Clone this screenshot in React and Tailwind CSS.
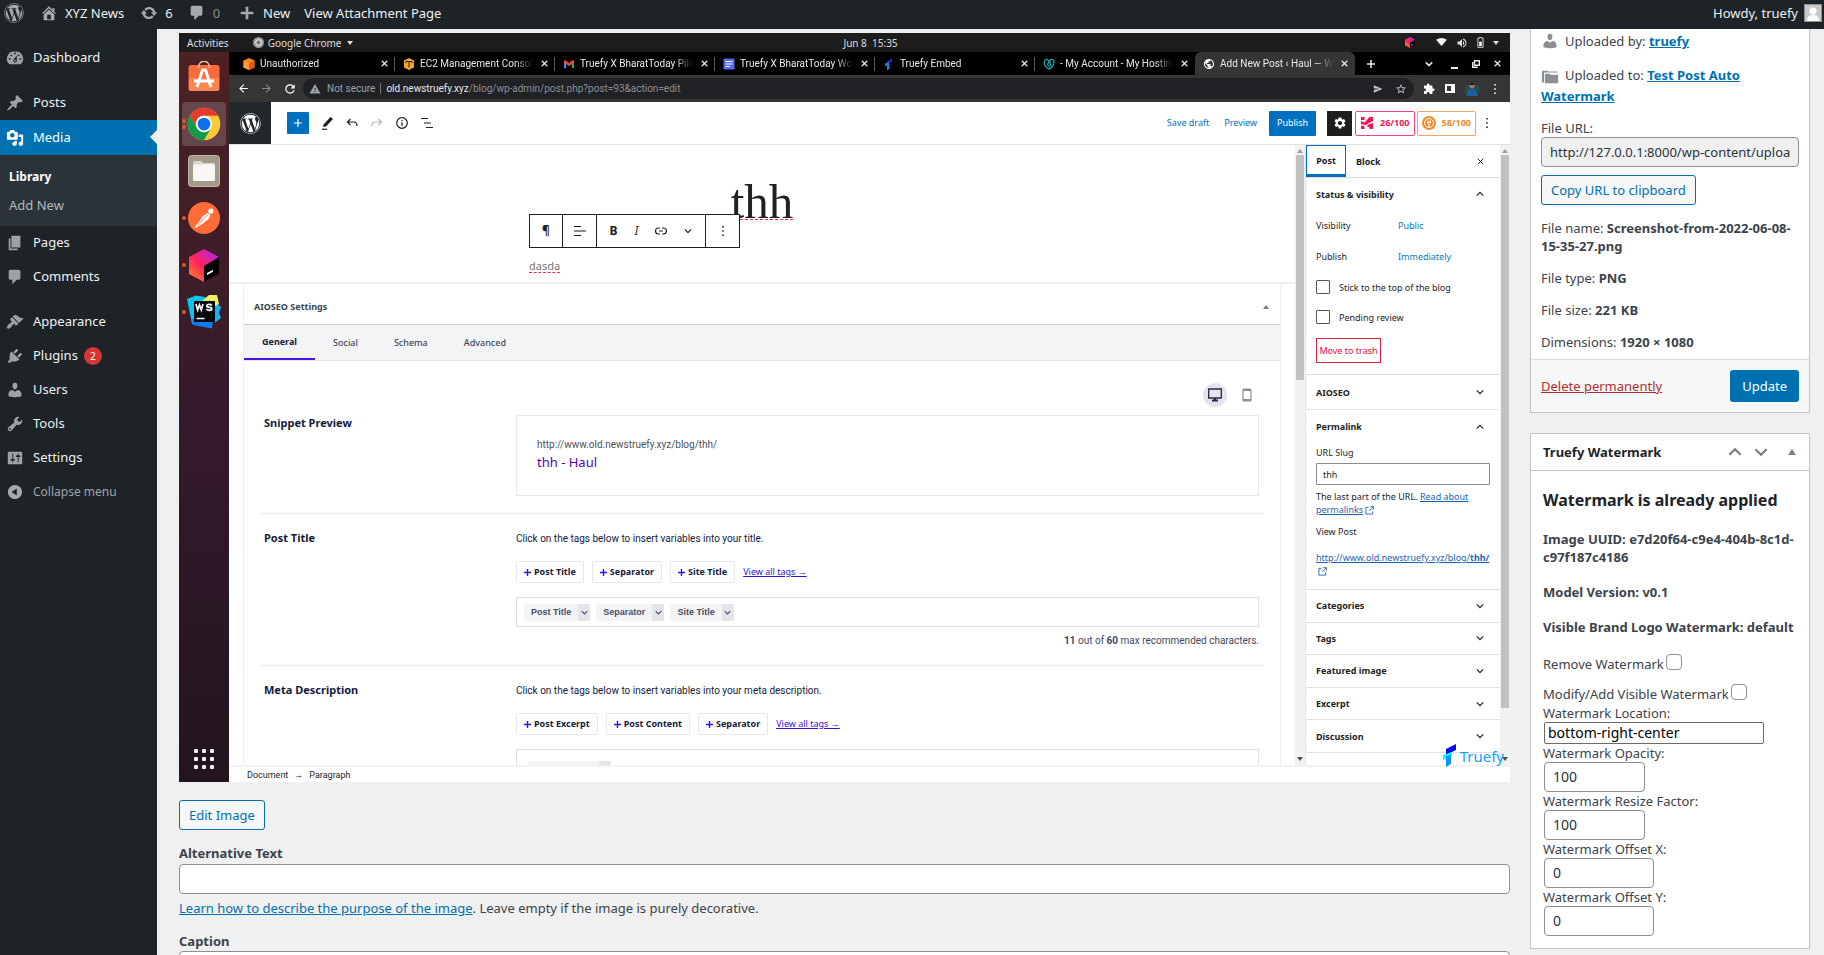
import React from "react";
import { FaWordpress } from "react-icons/fa";
import {
  MdArrowBack, MdArrowForward, MdRefresh, MdWarning, MdSend, MdStarBorder, MdExtension,
  MdSettings, MdPublic, MdVolumeUp,
} from "react-icons/md";

const ICONS = {
  home: "M16 8.5l1.53 1.53-1.06 1.06L10 4.6l-6.47 6.49-1.06-1.06L10 2.5l4 4v-2h2v4zm-6-2.46l6 5.99V18H4v-5.97zM12 17v-5H8v5h4z",
  update: "M10.2 3.28c3.53 0 6.43 2.61 6.92 6h2.08l-3.5 4-3.5-4h2.32c-.45-1.97-2.21-3.45-4.32-3.45-1.45 0-2.73.71-3.54 1.78L4.95 5.66C6.23 4.2 8.11 3.28 10.2 3.28zm-.4 13.44c-3.52 0-6.43-2.61-6.92-6H.8l3.5-4c1.17 1.33 2.33 2.67 3.5 4H5.48c.45 1.97 2.21 3.45 4.32 3.45 1.45 0 2.73-.71 3.54-1.78l1.71 1.95c-1.28 1.46-3.15 2.38-5.25 2.38z",
  comments: "M5 2h9c1.1 0 2 .9 2 2v7c0 1.1-.9 2-2 2h-2l-5 5v-5H5c-1.1 0-2-.9-2-2V4c0-1.1.9-2 2-2z",
  plus: "M17 8.5v3h-5.5V17h-3v-5.500H3v-3h5.500V3h3v5.500H17z",
  dashboard: "M3.76 17h12.48A7.998 7.998 0 0010 3a8 8 0 00-6.240 14zM10 4c.55 0 1 .45 1 1s-.45 1-1 1-1-.45-1-1 .45-1 1-1zM6 6c.55 0 1 .45 1 1s-.45 1-1 1-1-.45-1-1 .45-1 1-1zm8 0c.55 0 1 .45 1 1s-.45 1-1 1-1-.45-1-1 .45-1 1-1zm-5.370 5.550L12 7v6c0 1.1-.9 2-2 2s-2-.9-2-2c0-.57.24-1.08.63-1.45zM4 10c.55 0 1 .45 1 1s-.45 1-1 1-1-.45-1-1 .45-1 1-1zm12 0c.55 0 1 .45 1 1s-.45 1-1 1-1-.45-1-1 .45-1 1-1zm-5 3c0-.55-.45-1-1-1s-1 .45-1 1 .45 1 1 1 1-.45 1-1z",
  posts: "M10.44 3.02l1.82-1.82 6.36 6.35-1.83 1.82c-1.05-.68-2.48-.57-3.41.36l-.75.75c-.92.93-1.04 2.35-.35 3.41l-1.83 1.82-2.41-2.41-2.8 2.79c-.42.42-3.38 2.71-3.8 2.29s1.86-3.39 2.28-3.81l2.79-2.79L4.1 9.36l1.83-1.82c1.05.69 2.48.57 3.4-.36l.75-.75c.93-.92 1.05-2.35.36-3.41z",
  media: "M13 11V4c0-.55-.45-1-1-1h-1.67L9 1H5L3.67 3H2c-.55 0-1 .45-1 1v7c0 .55.45 1 1 1h10c.55 0 1-.45 1-1zM7 4.5c1.38 0 2.5 1.12 2.5 2.5S8.38 9.5 7 9.5 4.5 8.38 4.5 7 5.62 4.5 7 4.5zM14 6h5v10.5c0 1.38-1.12 2.5-2.5 2.5S14 17.88 14 16.5s1.12-2.5 2.5-2.5c.17 0 .34.02.5.05V9h-3V6zm-4 8.05V13h2v3.5c0 1.38-1.12 2.5-2.5 2.5S7 17.88 7 16.5 8.12 14 9.500 14c.17 0 .34.02.5.05z",
  pages: "M6 15V2h10v13H6zm-1 1h8v2H3V5h2v11z",
  appearance: "M14.48 11.06L7.41 3.99l1.5-1.5c.5-.56 2.3-.47 3.51.32 1.21.8 1.43 1.28 2.91 2.1 1.18.64 2.45 1.26 4.45.85zm-.71.71L6.7 4.7 4.93 6.47c-.39.39-.39 1.02 0 1.41l1.06 1.06c.39.39.39 1.03 0 1.42-.6.6-1.43 1.11-2.21 1.69-.35.26-.7.53-1.01.84C1.43 14.23.4 16.08 1.4 17.07c.99 1 2.84-.03 4.18-1.36.31-.31.58-.66.85-1.02.57-.78 1.08-1.61 1.69-2.21.39-.39 1.02-.39 1.41 0l1.06 1.06c.39.39 1.02.39 1.41 0z",
  plugins: "M13.11 4.36L9.87 7.6 8 5.73l3.24-3.24c.35-.34 1.05-.2 1.56.32.52.51.66 1.21.31 1.55zm-8 1.77l.91-1.12 9.01 9.01-1.19.84c-.71.71-2.63 1.16-3.82 1.16H6.14L4.9 17.26c-.59.59-1.54.59-2.12 0a1.49 1.49 0 010-2.12l1.24-1.24v-3.88c0-1.13.4-3.19 1.09-3.89zm7.26 3.97l3.24-3.24c.34-.35 1.04-.21 1.55.31.52.51.66 1.21.31 1.55l-3.24 3.25z",
  users: "M10 9.25c-2.27 0-2.73-3.44-2.73-3.44C7 4.02 7.82 2 9.97 2c2.16 0 2.98 2.02 2.71 3.81 0 0-.41 3.44-2.68 3.44zm0 2.57L12.72 10c2.39 0 4.52 2.33 4.52 4.53v2.49s-3.65 1.13-7.24 1.13c-3.65 0-7.24-1.13-7.24-1.13v-2.49c0-2.25 1.94-4.48 4.47-4.48z",
  tools: "M16.68 9.77c-1.34 1.34-3.3 1.67-4.95.99l-5.41 6.52c-.99.99-2.59.99-3.58 0s-.99-2.59 0-3.57l6.52-5.42c-.68-1.65-.35-3.61.99-4.95 1.28-1.28 3.12-1.62 4.72-1.06l-2.89 2.89 2.82 2.82 2.86-2.87c.53 1.58.18 3.39-1.08 4.65zM3.81 16.21c.4.39 1.04.39 1.43 0 .4-.4.4-1.04 0-1.43-.39-.4-1.03-.4-1.43 0a1.02 1.02 0 000 1.43z",
  settings: "M18 16V4c0-.55-.45-1-1-1H3c-.55 0-1 .45-1 1v12c0 .55.45 1 1 1h14c.55 0 1-.45 1-1zM8 11h1c.55 0 1 .45 1 1s-.45 1-1 1H8v1.5c0 .28-.22.5-.5.5s-.5-.22-.5-.5V13H6c-.55 0-1-.45-1-1s.45-1 1-1h1V5.5c0-.28.22-.5.5-.5s.5.22.5.5V11zm5-2h-1c-.55 0-1-.45-1-1s.45-1 1-1h1V5.5c0-.28.22-.5.5-.5s.5.22.5.5V7h1c.55 0 1 .45 1 1s-.45 1-1 1h-1v5.5c0 .28-.22.5-.5.5s-.5-.22-.5-.5V9z",
  collapse: "M10 2.16c4.33 0 7.84 3.51 7.84 7.84s-3.51 7.84-7.84 7.84S2.16 14.33 2.16 10 5.71 2.16 10 2.16zm2 11.72V6.12L6.18 9.97z",
  folder: "M1 3h6l1 1h10v1H3.500v11H1zM4.500 6.500h5l1 1H19V17H4.500z",
};

function Dash({ name, className = "size-[18px]" }) {
  return (
    <svg viewBox="0 0 20 20" className={`shrink-0 ${className}`} fill="currentColor" fillRule="evenodd" aria-hidden="true">
      <path d={ICONS[name]} />
    </svg>
  );
}

function Line({ d, width = 1.5, className }) {
  return (
    <svg viewBox="0 0 10 10" className={`shrink-0 ${className}`} fill="none" stroke="currentColor" strokeWidth={width} aria-hidden="true">
      <path d={d} />
    </svg>
  );
}

const Chevron = ({ up = false, className = "size-2", width }) => <Line d={up ? "M1 7l4-4 4 4" : "M1 3l4 4 4-4"} width={width} className={className} />;
const Cross = ({ className = "size-[7px]", width = 1.8 }) => <Line d="M1 1l8 8M9 1L1 9" width={width} className={className} />;
const Plus = ({ className = "size-2", width = 1.5 }) => <Line d="M5 0v10M0 5h10" width={width} className={className} />;

function Kebab({ className = "" }) {
  return (
    <svg viewBox="0 0 4 12" className={`h-3 w-1 shrink-0 ${className}`} fill="currentColor" aria-hidden="true">
      <path d="M1.200 1h1.600v1.600H1.200zM1.200 5.200h1.600v1.600H1.200zM1.200 9.400h1.600V11H1.200z" />
    </svg>
  );
}

/* ---------- Admin chrome ---------- */

function AdminBar() {
  return (
    <header className="flex h-[29px] shrink-0 items-center bg-[#1d2327] pb-[3px] pl-1 pr-[2px] text-[13px] leading-[18px] text-[#f0f0f1]">
      <a href="#wp" aria-label="About WordPress" className="text-[#a7aaad]"><FaWordpress className="size-[20px]" /></a>
      <a href="#site" className="ml-4 flex items-center gap-[7px]"><Dash name="home" className="size-[18px] text-[#a7aaad]" />XYZ News</a>
      <a href="#updates" className="ml-4 flex items-center gap-[7px]"><Dash name="update" className="size-[18px] text-[#a7aaad]" />6</a>
      <a href="#comments" className="ml-[15px] flex items-center gap-[7px] text-[#8c8f94]"><Dash name="comments" className="size-[18px] text-[#a7aaad]" />0</a>
      <a href="#new" className="ml-[18px] flex items-center gap-[7px]"><Dash name="plus" className="size-[18px] text-[#a7aaad]" />New</a>
      <a href="#view" className="ml-[14px]">View Attachment Page</a>
      <a href="#profile" className="ml-auto flex items-center gap-[6px]">
        Howdy, truefy
        <svg viewBox="0 0 18 18" className="size-[18px]" aria-hidden="true">
          <rect width="18" height="18" fill="#8c8f94" /><rect x="1" y="1" width="16" height="16" fill="#c9c9c9" />
          <circle cx="9" cy="7" r="3.500" fill="#fff" /><path d="M3 17c0-4 2-6 6-6s6 2 6 6z" fill="#fff" />
        </svg>
      </a>
    </header>
  );
}

function MenuItem({ icon, label, badge, className = "" }) {
  return (
    <a href={`#${icon}`} className={`flex h-[34px] items-center gap-[9px] pl-[6px] text-[#f0f0f1] ${className}`}>
      <Dash name={icon} className="size-[18px] text-[#9ca2a7]" />
      {label}
      {badge && <span className="-ml-[3px] flex size-[18px] items-center justify-center rounded-full bg-[#d63638] text-[10px] text-white">{badge}</span>}
    </a>
  );
}

function AdminMenu() {
  return (
    <nav className="flex w-[157px] shrink-0 flex-col bg-[#1d2327] pt-3 text-[13px]">
      <MenuItem icon="dashboard" label="Dashboard" />
      <MenuItem icon="posts" label="Posts" className="mt-[11px]" />
      <a href="#media" className="relative flex h-[35px] items-center gap-[9px] bg-[#0071b0] pl-[6px] text-white">
        <Dash name="media" />Media
        <span className="absolute right-0 top-[10px] border-y-[7px] border-r-[7px] border-y-transparent border-r-[#f0f0f1]" />
      </a>
      <div className="flex flex-col gap-2 bg-[#2c3338] pb-[11px] pl-[9px] pt-3 leading-[20px]">
        <a href="#library" className="text-[12px] font-bold text-white">Library</a>
        <a href="#add" className="text-[13px] text-[#b4b9be]">Add New</a>
      </div>
      <MenuItem icon="pages" label="Pages" />
      <MenuItem icon="comments" label="Comments" />
      <MenuItem icon="appearance" label="Appearance" className="mt-[11px]" />
      <MenuItem icon="plugins" label="Plugins" badge="2" />
      <MenuItem icon="users" label="Users" />
      <MenuItem icon="tools" label="Tools" />
      <MenuItem icon="settings" label="Settings" />
      <button className="flex h-[34px] items-center gap-[9px] pl-[6px] text-[12px] text-[#a0a4a8]">
        <Dash name="collapse" className="size-[18px] text-[#a7aaad]" />Collapse menu
      </button>
    </nav>
  );
}

/* ---------- Desktop capture: dock ---------- */

function Dots({ n }) {
  return (
    <span className="absolute left-0 flex h-full flex-col items-center justify-center gap-[2px]">
      {Array.from({ length: n }, (_, i) => <i key={i} className="size-1 rounded-full bg-[#e95420]" />)}
    </span>
  );
}

function ChromeLogo({ className }) {
  return (
    <svg viewBox="0 0 48 48" className={className} aria-hidden="true">
      <circle cx="24" cy="24" r="23" fill="#fdc934" />
      <path d="M4.100 12.500A23 23 0 0124 1a23 23 0 0119.900 11.500H24A11.500 11.500 0 0014 29.800z" fill="#e33b2e" />
      <path d="M4.100 12.500A23 23 0 0024 47l10-17.200A11.500 11.500 0 0114 29.800z" fill="#149a4c" />
      <circle cx="24" cy="24" r="11.500" fill="#fff" /><circle cx="24" cy="24" r="9" fill="#0b72e7" />
    </svg>
  );
}

function Toolbox({ className, id }) {
  return (
    <svg viewBox="0 0 30 33" className={className} aria-hidden="true">
      <defs>
        <linearGradient id={id} x1="0" y1="1" x2="1" y2="0">
          <stop offset="0" stopColor="#ff9419" /><stop offset=".45" stopColor="#ff2160" /><stop offset="1" stopColor="#a227ff" />
        </linearGradient>
      </defs>
      <path d="M15 0l15 8v17l-15 8-15-8V8z" fill={`url(#${id})`} />
      <path d="M30 8v17l-15 8V17z" fill="#000" /><path d="M18 26l6-3.300v-2L18 24z" fill="#fff" />
    </svg>
  );
}

function Dock() {
  const tile = "relative flex h-11 w-full items-center justify-center";
  return (
    <div className="flex w-[50px] shrink-0 flex-col gap-[3px] bg-gradient-to-b from-[#4c2123] via-[#341a2c] to-[#22151e] px-[3px] pb-[13px] pt-[3px]">
      <div className={tile}>
        <svg viewBox="0 0 32 32" className="size-8" aria-hidden="true">
          <rect x="0.500" y="4" width="31" height="26" rx="2.500" fill="#fb6b3b" />
          <path d="M1 17h30v10q0 3-3 3H4q-3 0-3-3z" fill="#fd8554" />
          <path d="M10.500 7c0-9 11-9 11 0" fill="none" stroke="#f6c7a0" strokeWidth="1.500" />
          <path d="M9 26l5.500-17h3L23 26" fill="none" stroke="#fff" strokeWidth="3" strokeLinejoin="round" />
          <path d="M6 20h20" stroke="#fff" strokeWidth="3" />
        </svg>
      </div>
      <div className={`${tile} rounded bg-[#65464d]`}><Dots n={2} /><ChromeLogo className="size-[34px]" /></div>
      <div className={tile}>
        <svg viewBox="0 0 32 32" className="size-8" aria-hidden="true">
          <rect x="0.500" y="0.500" width="31" height="31" rx="3" fill="#a39a89" stroke="#beb6a6" />
          <path d="M5 8q0-2 2-2h6l2 2h10q2 0 2 2v14q0 2-2 2H7q-2 0-2-2z" fill="#dcd8cf" />
          <rect x="5" y="9.500" width="22" height="16.500" rx="2" fill="#f8f7f5" />
        </svg>
      </div>
      <div className={tile}><Dots n={1} />
        <svg viewBox="0 0 32 32" className="size-8" aria-hidden="true">
          <circle cx="16" cy="16" r="16" fill="#ff6c37" />
          <circle cx="22.800" cy="9" r="2.600" fill="#fff" />
          <path d="M19.500 11l3 1.500-1.500 4-6 5-7.500 4.500-1-.5 5.500-7 2.500-4z" fill="#fff" />
          <path d="M13 19.500l7-7M10 23l5-4.500" stroke="#ff6c37" strokeWidth=".8" />
        </svg>
      </div>
      <div className={tile}><Dots n={1} /><Toolbox id="toolbox-dock" className="h-[33px] w-[30px]" /></div>
      <div className={tile}><Dots n={1} />
        <svg viewBox="0 0 34 34" className="size-[34px]" aria-hidden="true">
          <path d="M0 4l9-3.500L18 2l-2 27-11 0z" fill="#0ac6ee" />
          <path d="M16 3l14-2 1.500 9 2.500 2-2 6 2 5-6 4.500-14-4z" fill="#13b4f3" />
          <path d="M15 6l7-6h8l2 9-6 3z" fill="#f0ee62" /><path d="M4 24l22-1-1 10.500L6 30z" fill="#0b7cf5" />
          <rect x="7" y="6" width="21" height="21" fill="#04090c" />
          <path d="M9 9l1.700 6 1.800-5 1.800 5L16 9M24.800 10.300c-1.500-1.500-5-1.300-5 .6 0 2 5 .9 5 2.900 0 2-3.800 2-5.400.4" fill="none" stroke="#fff" strokeWidth="1.700" />
          <path d="M9.500 23.500h8" stroke="#fff" strokeWidth="1.500" />
        </svg>
      </div>
      <div className="mx-auto mt-auto grid grid-cols-3 gap-x-1 gap-y-[4px]">
        {Array.from({ length: 9 }, (_, i) => <i key={i} className="size-[4px] rounded-[1px] bg-[#f2f0f1]" />)}
      </div>
    </div>
  );
}

/* ---------- Desktop capture: browser ---------- */

const favicon = {
  cube: <svg viewBox="0 0 12 12" className="size-3 shrink-0"><path d="M6 0l5.500 2.500v7L6 12 .5 9.500v-7z" fill="#f58220" /><path d="M.5 2.500L6 5v7L.5 9.500z" fill="#ff9d3c" /><path d="M11.500 2.500L6 5v7l5.500-2.500z" fill="#e8590c" /></svg>,
  ec2: <svg viewBox="0 0 12 12" className="size-3 shrink-0"><path d="M6 0l5 2.500v7L6 12 1 9.500v-7z" fill="#f2a32c" /><path d="M3 3.500h6M6 3.500v6M3 3.500v1.500M9 3.500v1.500" stroke="#2b1f08" strokeWidth="1" fill="none" /></svg>,
  gmail: <svg viewBox="0 0 12 12" className="size-3 shrink-0"><path d="M1 10V3h2.200v7z" fill="#4285f4" /><path d="M8.800 10V3H11v7z" fill="#34a853" /><path d="M1 3l1.500-1L6 5l3.500-3L11 3v1.500L6 8.200 1 4.500z" fill="#ea4335" /></svg>,
  docs: <svg viewBox="0 0 12 12" className="size-3 shrink-0"><rect x=".5" y=".5" width="11" height="11" rx="1" fill="#5468f0" /><path d="M2.500 3.500h7M2.500 6h7M2.500 8.500h4.500" stroke="#fff" strokeWidth="1.200" /></svg>,
  truefy: <svg viewBox="0 0 12 12" className="size-3 shrink-0"><path d="M4 3.500l5-3v3l-5 2.500z" fill="#3a1cf0" /><path d="M2 5.500l4-1v2.500l-4 1zM4 6.500h2.500V11L4 12z" fill="#1787e8" /></svg>,
  godaddy: <svg viewBox="0 0 12 12" className="size-3 shrink-0"><path d="M6 11C2.500 9.500.5 6 1.500 3s4-1.500 5.500 1.500S6 9 5 7.500 7 .5 9.500 1.500 11.500 8.500 6 11z" fill="none" stroke="#16b1b0" strokeWidth="1.200" /></svg>,
  globe: <MdPublic className="size-3 shrink-0 text-white" />,
};

const TABS = [
  ["cube", "Unauthorized"], ["ec2", "EC2 Management Console"], ["gmail", "Truefy X BharatToday Pilot"],
  ["docs", "Truefy X BharatToday Work"], ["truefy", "Truefy Embed"], ["godaddy", "- My Account - My Hosting"],
  ["globe", "Add New Post ‹ Haul — WordPress"],
];

function BrowserTabs() {
  return (
    <div className="flex h-[23px] items-stretch bg-black pl-[6px] font-['Roboto',sans-serif] text-[10px] text-[#e8e8e8]">
      {TABS.map(([icon, title], i) => {
        const active = i === TABS.length - 1;
        return (
          <div key={title} className={`flex min-w-0 max-w-[160px] flex-1 items-center ${active ? "rounded-t-md bg-[#353535]" : ""}`}>
            <span className="flex min-w-0 flex-1 items-center gap-[5px] pl-2">
              {favicon[icon]}
              <span className="min-w-0 flex-1 overflow-hidden whitespace-nowrap [mask-image:linear-gradient(to_right,#000_84%,transparent)]">{title}</span>
            </span>
            <button aria-label={`Close ${title}`} className="ml-1 flex w-[14px] justify-center"><Cross /></button>
            <i className={`ml-[3px] h-[14px] w-px ${i < 5 ? "bg-[#555]" : ""}`} />
          </div>
        );
      })}
      <div className="flex shrink-0 items-center pl-[12px]"><Plus width={2} /></div>
      <div className="ml-auto flex shrink-0 items-center gap-[14px] pr-[9px]">
        <Chevron className="mr-[4px] size-2" width={2} />
        <i className="mt-2 h-[2px] w-[7px] bg-[#e8e8e8]" />
        <svg viewBox="0 0 8 8" className="size-2" fill="none" stroke="currentColor" strokeWidth="1.400" aria-hidden="true"><path d="M2.500.7h4.800v4.600H2.500z" /><path d="M.7 2v5.300h5" /></svg>
        <Cross />
      </div>
    </div>
  );
}

function AddressBar() {
  return (
    <div className="flex h-[27px] items-center bg-[#353535] font-['Roboto',sans-serif] text-[10px] text-[#9aa0a6]">
      <div className="flex items-center gap-[10px] pl-2">
        <MdArrowBack className="size-[13px] text-white" /><MdArrowForward className="size-[13px] text-[#8a8a8a]" /><MdRefresh className="size-[14px] text-white" />
      </div>
      <div className="ml-[6px] flex h-[21px] flex-1 items-center rounded-full bg-[#202124] pl-[6px] pr-[7px]">
        <MdWarning className="size-3" />
        <span className="ml-[6px]">Not secure</span>
        <i className="mx-[5px] h-[11px] w-px bg-[#777]" />
        <span className="text-[#8a8f94]"><span className="text-[#e8eaed]">old.newstruefy.xyz</span>/blog/wp-admin/post.php?post=93&amp;action=edit</span>
        <MdSend className="ml-auto size-[10px] text-[#c4c7c5]" /><MdStarBorder className="ml-3 size-3 text-[#c4c7c5]" />
      </div>
      <div className="flex items-center gap-[10px] pl-[9px] pr-[13px] text-white">
        <MdExtension className="size-3" />
        <i className="h-[9px] w-[10px] border-2 border-r-4 border-white" />
        <svg viewBox="0 0 14 14" className="size-[14px]" aria-hidden="true"><path d="M0 3h14v7H0z" fill="#23504f" /><circle cx="7" cy="4" r="2.500" fill="#a9745a" /><path d="M4.500 3q2.500-4 5 0z" fill="#111" /><path d="M1.500 14c0-5 2-7 5.500-7s5.500 2 5.500 7z" fill="#1d5f9e" /></svg>
        <Kebab className="ml-1" />
      </div>
    </div>
  );
}

function ScorePill({ color, children, score }) {
  return <span className={`flex h-[25px] items-center gap-[6px] rounded-[2px] border px-1 font-bold ${color}`}>{children}{score}</span>;
}

function EditorHeader() {
  const s = { fill: "none", stroke: "currentColor", strokeWidth: 1.2 };
  return (
    <div className="flex h-[43px] items-center border-b border-[#e0e0e0] bg-white text-[9px] text-[#1e1e1e]">
      <div className="flex h-full w-[42px] items-center justify-center bg-[#23282d] text-white"><FaWordpress className="size-[21px]" /></div>
      <button aria-label="Add block" className="ml-4 flex size-[22px] items-center justify-center rounded-[1px] bg-[#0070be] text-white"><Plus /></button>
      <div className="ml-3 flex items-center gap-[13px]">
        <svg viewBox="0 0 12 14" className="h-[14px] w-3"><path d="M2 11l.6-2.600L9.500 1 12 3 5 10.400z" fill="currentColor" /><path d="M1 13.300h5" {...s} /></svg>
        <svg viewBox="0 0 12 12" className="size-3"><path d="M4.500 2L1.500 5l3 3M1.500 5H8q3 0 3 4" {...s} /></svg>
        <svg viewBox="0 0 12 12" className="size-3 text-[#b5b5b5]"><path d="M7.500 2l3 3-3 3M10.500 5H4Q1 5 1 9" {...s} /></svg>
        <svg viewBox="0 0 12 12" className="size-3"><circle cx="6" cy="6" r="5.300" {...s} /><path d="M6 5.300v3.700M6 3v1.200" {...s} /></svg>
        <svg viewBox="0 0 12 12" className="size-3"><path d="M0 1.500h7M3 6h7M5 10.500h7" {...s} /></svg>
      </div>
      <div className="ml-auto flex items-center text-[#0071bd]">
        <a href="#draft">Save draft</a>
        <a href="#preview" className="ml-[15px]">Preview</a>
        <button className="ml-3 h-[25px] w-[47px] rounded-[1px] bg-[#0070be] text-white">Publish</button>
        <button aria-label="Settings" className="ml-[11px] mr-[3px] flex size-[25px] items-center justify-center bg-[#1e1e1e] text-white"><MdSettings className="size-[14px]" /></button>
        <div className="flex gap-[2px]">
          <ScorePill color="border-[#f0447a] text-[#f0125a]" score="26/100">
            <svg viewBox="0 0 14 14" className="size-[14px]" fill="currentColor"><path d="M1 1h3.500v3H1zM9.500 1H13v4L5.500 9 1 8V5l3.500 1.500zM1 9.500l3.500.7V13H1zM9.500 8L13 7v6H9.500v-1.500l-3-1.500z" /></svg>
          </ScorePill>
          <ScorePill color="border-[#f5a25c] text-[#f38a2b]" score="58/100">
            <svg viewBox="0 0 14 14" className="size-[14px]"><circle cx="7" cy="7" r="7" fill="currentColor" /><circle cx="7" cy="7" r="4.500" fill="none" stroke="#fff" strokeWidth="1" /><path d="M7 8v4M5 6.500h4M5.700 4.500v3M8.300 4.500v3" stroke="#fff" strokeWidth="1.200" /></svg>
          </ScorePill>
        </div>
        <Kebab className="ml-[9px] mr-[21px] text-[#1e1e1e]" />
      </div>
    </div>
  );
}

function BlockToolbar() {
  const s = { fill: "none", stroke: "currentColor", strokeWidth: 1.2 };
  return (
    <div className="absolute left-[300px] top-[69px] flex h-[34px] w-[211px] items-stretch border border-[#1e1e1e] bg-white text-[12px] text-[#1e1e1e]">
      <button className="w-[33px] border-r border-[#1e1e1e] font-bold">¶</button>
      <button aria-label="Align" className="flex w-[34px] items-center justify-center border-r border-[#1e1e1e]"><svg viewBox="0 0 12 12" className="size-3"><path d="M0 1.500h7M0 6h12M0 10.500h7" {...s} /></svg></button>
      <span className="flex flex-1 items-center justify-around border-r border-[#1e1e1e] px-1">
        <button className="font-bold">B</button><button className="italic">I</button>
        <svg viewBox="0 0 12 12" className="size-3"><path d="M5 3H3.500a3 3 0 000 6H5M7 3h1.500a3 3 0 010 6H7M4 6h4" {...s} /></svg>
        <Chevron className="size-2" />
      </span>
      <button aria-label="Options" className="flex w-[33px] items-center justify-center"><Kebab /></button>
    </div>
  );
}

function TagRow({ tags }) {
  return (
    <div className="flex h-[22px] items-stretch gap-2 text-[9px] text-[#141b38]">
      {tags.map((t) => (
        <button key={t} className="flex items-center gap-[3px] rounded-[2px] border border-[#e8e8eb] px-[7px] font-bold">
          <Plus className="size-[7px] text-[#3510d8]" width={2} />{t}
        </button>
      ))}
      <a href="#tags" className="flex items-center text-[#3510d8]"><span className="underline">View all tags →</span></a>
    </div>
  );
}

function Chip({ children }) {
  return (
    <span className="flex h-[17px] items-stretch overflow-hidden rounded-[2px] bg-[#f3f4f5] font-['Liberation_Sans',sans-serif] text-[9px] font-bold text-[#4b4c66]">
      <span className="flex items-center px-[7px]">{children}</span>
      <span className="flex w-3 items-center justify-center bg-[#e4e4ea]"><Chevron className="size-[7px]" /></span>
    </span>
  );
}

function EditorCanvas() {
  return (
    <div className="relative flex min-w-0 flex-1 flex-col overflow-hidden bg-white">
      <div className="flex h-[139px] shrink-0 flex-col border-b-2 border-[#f0f0f0] pt-[29px]">
        <h1 className="text-center font-['Liberation_Serif',serif] text-[49px] leading-[56px] text-[#222]"><span className="underline decoration-[#e8304a] decoration-dashed decoration-1 underline-offset-1">thh</span></h1>
        <p className="mt-[28px] pl-[300px] text-[11px] leading-[16px] text-[#777]"><span className="underline decoration-[#e8304a] decoration-dashed decoration-1 underline-offset-2">dasda</span></p>
      </div>
      <BlockToolbar />
      <section className="mx-[14px] flex flex-1 flex-col border-x border-[#efefef]">
        <div className="flex h-[41px] shrink-0 items-center justify-between border-b border-[#c9ccd0] pl-[10px] pr-[11px] pt-[6px] text-[9px] font-bold text-[#3c434a]">
          AIOSEO Settings
          <i className="border-x-[3px] border-b-4 border-x-transparent border-b-[#787c82]" />
        </div>
        <div className="flex h-[36px] shrink-0 items-stretch border-b border-[#e5e5e8] bg-[#f3f4f5] text-[9px] font-medium text-[#434960]">
          <button className="border-b-2 border-[#4a12dc] px-[18px] font-bold text-[#141b38]">General</button>
          <button className="px-[18px]">Social</button>
          <button className="px-[18px]">Schema</button>
          <button className="px-[18px]">Advanced</button>
        </div>
        <div className="grid grid-cols-[257px_1fr] pl-[15px] pr-[16px] text-[9px] text-[#141b38]">
          <div className="col-span-2 flex h-[54px] items-center justify-end gap-[15px] pr-[12px] pt-[13px]">
            <span className="flex size-6 items-center justify-center rounded-full bg-[#e4e4ea] text-[#26274a]">
              <svg viewBox="0 0 14 14" className="size-[14px]" fill="none" stroke="currentColor" strokeWidth="1.300"><path d="M.7 1h12.600v9H.7z" /><path d="M4 12.500h6M7 10v2.500" strokeWidth="2" /></svg>
            </span>
            <svg viewBox="0 0 10 14" className="h-[14px] w-[10px] text-[#8c8f9a]" fill="none" stroke="currentColor" strokeWidth="1.200"><rect x="1" y="1" width="8" height="12" rx="1" /><path d="M1 2h8M1 12h8" strokeWidth="1.800" /></svg>
          </div>
          <h2 className="pl-[5px] text-[11px] font-bold leading-[16px]">Snippet Preview</h2>
          <div className="mr-[5px] h-[81px] border border-[#e8e8eb] pl-5 pt-5 font-['Roboto',sans-serif] text-[10px] leading-[18px] text-[#4d5156]">
            http://www.old.newstruefy.xyz/blog/thh/
            <div className="font-['Noto_Sans',sans-serif] text-[13px] leading-[17px] text-[#4a08a8]">thh - Haul</div>
          </div>
          <hr className="col-span-2 mt-[17px] border-[#ececef]" />
          <h2 className="mt-[15px] pl-[5px] text-[11px] font-bold leading-[18px]">Post Title</h2>
          <div className="mr-[5px] pt-4">
            <p className="mb-[13px] font-['Roboto',sans-serif] text-[10px] leading-[18px]">Click on the tags below to insert variables into your title.</p>
            <TagRow tags={["Post Title", "Separator", "Site Title"]} />
            <div className="mt-[14px] flex h-[30px] items-center gap-[6px] border border-[#dddde2] pl-[7px]">
              <Chip>Post Title</Chip><Chip>Separator</Chip><Chip>Site Title</Chip>
            </div>
            <p className="mb-[15px] mt-[5px] text-right font-['Roboto',sans-serif] text-[10px] leading-[18px] text-[#434960]"><b>11</b> out of <b>60</b> max recommended characters.</p>
          </div>
          <hr className="col-span-2 border-[#ececef]" />
          <h2 className="mt-[15px] pl-[5px] text-[11px] font-bold leading-[18px]">Meta Description</h2>
          <div className="mr-[5px] pt-4">
            <p className="mb-[13px] font-['Roboto',sans-serif] text-[10px] leading-[18px]">Click on the tags below to insert variables into your meta description.</p>
            <TagRow tags={["Post Excerpt", "Post Content", "Separator"]} />
            <div className="mt-[14px] flex h-[60px] items-start border border-[#dddde2] pl-[11px] pt-[11px]">
              <div className="flex h-[17px] w-[83px] justify-end bg-[#f3f4f5]"><i className="w-3 bg-[#e4e4ea]" /></div>
            </div>
          </div>
        </div>
      </section>
    </div>
  );
}

function Scrollbar({ thumb }) {
  return (
    <div className="flex w-[10px] shrink-0 flex-col items-center bg-[#f1f1f1]">
      <i className="mt-1 border-x-[3px] border-b-4 border-x-transparent border-b-[#a0a0a0]" />
      <i className={`mt-[2px] w-2 bg-[#c1c1c1] ${thumb}`} />
      <i className="mb-1 mt-auto border-x-[3px] border-t-4 border-x-transparent border-t-[#505050]" />
    </div>
  );
}

function PanelHead({ title, up, className = "" }) {
  return <button className={`flex w-full items-center justify-between pl-[10px] pr-4 text-left font-bold ${className}`}>{title}<Chevron up={up} className="size-2" /></button>;
}

function ExtIcon({ className = "" }) {
  return <svg viewBox="0 0 10 10" className={`inline size-[9px] ${className}`} fill="none" stroke="currentColor" strokeWidth="1"><path d="M4 1.500H1v7.500h7.500V6M6 .7h3.300V4M9 1L4.500 5.500" /></svg>;
}

function EditorSidebar() {
  const check = "size-[14px] appearance-none rounded-[1px] border border-[#555]";
  return (
    <aside className="flex w-[195px] shrink-0 flex-col overflow-hidden border-l border-[#e6e6e6] bg-white text-[9px] leading-[13px] text-[#1e1e1e]">
      <div className="flex h-[33px] shrink-0 items-stretch border-b border-[#ddd] pr-4 font-bold">
        <button className="w-[40px] border border-b-[3px] border-[#0070be]">Post</button>
        <button className="px-[10px]">Block</button>
        <button aria-label="Close settings" className="ml-auto"><Cross width={1.4} /></button>
      </div>
      <div className="h-[197px] shrink-0 border-b border-[#ddd]">
        <PanelHead title="Status & visibility" up className="h-[32px]" />
        <dl className="grid grid-cols-[82px_1fr] gap-y-[18px] pl-[10px] pt-[9px]">
          <dt>Visibility</dt><dd><a href="#public" className="text-[#007cba]">Public</a></dd>
          <dt>Publish</dt><dd><a href="#now" className="text-[#007cba]">Immediately</a></dd>
        </dl>
        <div className="flex flex-col gap-4 pl-[10px] pt-[17px]">
          <label className="flex h-[14px] items-center gap-[9px]"><input type="checkbox" className={check} />Stick to the top of the blog</label>
          <label className="flex h-[14px] items-center gap-[9px]"><input type="checkbox" className={check} />Pending review</label>
        </div>
        <button className="ml-[10px] mt-[14px] h-[25px] w-[65px] whitespace-nowrap border border-[#e02440] text-[#e0103c]">Move to trash</button>
      </div>
      <PanelHead title="AIOSEO" className="h-[35px] shrink-0 border-b border-[#e6e6e6]" />
      <div className="h-[180px] shrink-0 border-b border-[#ddd]">
        <PanelHead title="Permalink" up className="h-[33px]" />
        <div className="px-[10px] pt-[3px]">
          <label className="block"><span className="mb-1 block">URL Slug</span>
            <input defaultValue="thh" className="block h-[22px] w-full rounded-[1px] border border-[#8a8a8a] px-[6px]" /></label>
          <p className="mt-[5px]">The last part of the URL. <a href="#read" className="text-[#1c64b0] underline">Read about permalinks</a> <ExtIcon className="text-[#1c64b0]" /></p>
          <p className="mt-[9px]">View Post</p>
          <p className="mt-[13px] whitespace-nowrap text-[#1c64b0]"><a href="#post" className="underline">http://www.old.newstruefy.xyz/blog/<b>thh/</b></a><br /><ExtIcon className="ml-[2px]" /></p>
        </div>
      </div>
      <div className="grid h-[163px] shrink-0">
        {["Categories", "Tags", "Featured image", "Excerpt", "Discussion"].map((t) => <PanelHead key={t} title={t} className="border-b border-[#e0e0e0]" />)}
      </div>
    </aside>
  );
}

function DesktopCapture() {
  return (
    <figure className="relative flex flex-col bg-white">
      <div className="relative flex h-[19px] items-center bg-[#1d1d1d] px-2 text-[10px] text-[#dedede]">
        Activities
        <span className="ml-6 flex items-center gap-1"><svg viewBox="0 0 12 12" className="size-[11px]"><circle cx="6" cy="6" r="6" fill="#9a9a9a" /><circle cx="6" cy="6" r="3" fill="#777" stroke="#eee" strokeWidth="1.200" /></svg>Google Chrome<i className="ml-px border-x-[3px] border-t-4 border-x-transparent border-t-[#dedede]" /></span>
        <span className="ml-auto flex items-center gap-[9px] pr-[3px]">
          <Toolbox id="toolbox-tray" className="mr-[12px] h-[11px] w-[10px]" />
          <svg viewBox="0 0 12 10" className="h-[9px] w-[11px]"><path d="M0 2q6-4 12 0L6 9z" fill="#f2f2f2" /></svg>
          <MdVolumeUp className="size-3" />
          <svg viewBox="0 0 8 12" className="h-[11px] w-[7px]"><path d="M3 0h2v1h2v10.500H1V1h2z" fill="none" stroke="#eee" /><path d="M2.500 5h3v5h-3z" fill="#fff" /></svg>
          <i className="border-x-[3px] border-t-4 border-x-transparent border-t-[#dedede]" />
        </span>
        <span className="pointer-events-none absolute inset-x-0 pl-[52px] text-center">Jun 8 &nbsp;15:35</span>
      </div>
      <div className="flex">
        <Dock />
        <div className="flex min-w-0 flex-1 flex-col">
          <BrowserTabs />
          <AddressBar />
          <EditorHeader />
          <div className="flex h-[620px]">
            <EditorCanvas />
            <Scrollbar thumb="h-[225px]" />
            <EditorSidebar />
            <Scrollbar thumb="h-[553px]" />
          </div>
          <div className="flex h-[17px] items-center gap-[6px] border-t-2 border-[#f2f2f2] pl-[18px] font-['Roboto',sans-serif] text-[9px] text-[#1e1e1e]"><span>Document</span><span>→</span><span>Paragraph</span></div>
        </div>
      </div>
      <div className="absolute bottom-[15px] right-[6px] flex items-center gap-[3px] text-[15px] leading-[22px] text-[#09a5fb]">
        <svg viewBox="0 0 14 23" className="h-[23px] w-[14px]" aria-hidden="true"><path d="M3 5l10-5v6L3 11z" fill="#0a0af0" /><path d="M0 11l9-3v4L0 16z" fill="#0ff" /><path d="M3 12l5-1v9l-5 3z" fill="#0a96ff" /></svg>
        Truefy
      </div>
    </figure>
  );
}

/* ---------- Right column ---------- */

const secondary = "h-[30px] rounded-[3px] border border-[#0071b0] bg-[#f6f7f7] px-[9px] text-[13px] text-[#0071b0]";
const link = "text-[#0071b0] underline";

function SaveBox() {
  return (
    <section className="border border-t-0 border-[#c3c4c7] bg-white leading-[18px]">
      <div className="px-[10px] pb-2 pt-[2px]">
        <p className="flex items-center gap-[6px] leading-[20px]"><Dash name="users" className="size-[18px] text-[#8c8f94]" /><span>Uploaded by: <a href="#user" className={`${link} font-bold`}>truefy</a></span></p>
        <p className="mt-[14px] leading-[20px]"><Dash name="folder" className="mr-[6px] inline size-[18px] text-[#8c8f94]" />Uploaded to: <a href="#parent" className={`${link} font-bold`}>Test Post Auto Watermark</a></p>
        <label className="mt-[13px] block">File URL:
          <input readOnly defaultValue="http://127.0.0.1:8000/wp-content/uploads/2022/06/Screenshot-from-2022-06-08-15-35-27.png" className="block h-[30px] w-full rounded-[4px] border border-[#8c8f94] bg-[#f0f0f1] px-2 text-[13px] text-[#2c3338]" />
        </label>
        <button className={`mt-2 ${secondary}`}>Copy URL to clipboard</button>
        <p className="mt-[14px]">File name: <b>Screenshot-from-2022-06-08-15-35-27.png</b></p>
        <p className="mt-[14px]">File type: <b>PNG</b></p>
        <p className="mt-[14px]">File size: <b>221 KB</b></p>
        <p className="mt-[14px]">Dimensions: <b>1920 × 1080</b></p>
      </div>
      <div className="flex items-center justify-between border-t border-[#dcdcde] bg-[#f6f7f7] p-[10px]">
        <a href="#delete" className="text-[#b32d2e] underline">Delete permanently</a>
        <button className="h-8 rounded-[3px] bg-[#0071b0] px-3 text-[13px] text-white">Update</button>
      </div>
    </section>
  );
}

function Field({ label, value, className = "h-[30px] rounded-[4px] border-[#8c8f94] px-2 text-[14px] text-[#2c3338]", width }) {
  return <label className="block">{label}<input defaultValue={value} className={`ml-px block border bg-white ${width} ${className}`} /></label>;
}

function WatermarkBox() {
  const check = "size-4 appearance-none rounded-[4px] border border-[#8c8f94] bg-white";
  return (
    <section className="border border-[#c3c4c7] bg-white leading-[18px]">
      <div className="flex h-[37px] items-center border-b border-[#c3c4c7] pl-3 pr-[13px] text-[#787c82]">
        <h2 className="text-[13px] font-bold text-[#1d2327]">Truefy Watermark</h2>
        <button aria-label="Move up" className="ml-auto"><Chevron up className="size-[14px]" /></button>
        <button aria-label="Move down" className="ml-3"><Chevron className="size-[14px]" /></button>
        <i className="ml-[20px] border-x-4 border-b-[6px] border-x-transparent border-b-[#787c82]" />
      </div>
      <div className="px-3 pb-3 pt-[19px]">
        <h3 className="whitespace-nowrap text-[16px] font-bold leading-[20px] text-[#1d2327]">Watermark is already applied</h3>
        <p className="mt-[20px] font-bold">Image UUID: e7d20f64-c9e4-404b-8c1d-c97f187c4186</p>
        <p className="mt-[17px] font-bold">Model Version: v0.1</p>
        <p className="mt-[17px] whitespace-nowrap font-bold">Visible Brand Logo Watermark: default</p>
        <label className="mt-[18px] flex gap-[2px] leading-[20px]">Remove Watermark<input type="checkbox" className={check} /></label>
        <label className="mt-[10px] flex gap-[2px] leading-[20px]">Modify/Add Visible Watermark<input type="checkbox" className={check} /></label>
        <Field label="Watermark Location:" value="bottom-right-center" width="w-[220px]" className="h-[22px] rounded-[2px] border-[#6b6b6b] px-[3px] text-[14px] text-black" />
        <Field label="Watermark Opacity:" value="100" width="w-[101px]" />
        <Field label="Watermark Resize Factor:" value="100" width="w-[101px]" />
        <Field label="Watermark Offset X:" value="0" width="w-[110px]" />
        <Field label="Watermark Offset Y:" value="0" width="w-[110px]" />
      </div>
    </section>
  );
}

export default function App() {
  return (
    <div className="flex h-screen flex-col overflow-hidden bg-[#f0f0f1] font-['Noto_Sans',sans-serif] text-[13px] text-[#3c434a]">
      <AdminBar />
      <div className="flex min-h-0 flex-1">
        <AdminMenu />
        <main className="flex min-w-0 flex-1 items-start gap-5 pl-[22px] pr-[14px]">
          <div className="min-w-0 flex-1 pt-1 leading-[18px]">
            <DesktopCapture />
            <button className={`mt-[18px] ${secondary}`}>Edit Image</button>
            <label htmlFor="alt" className="mb-[2px] mt-[14px] block font-bold">Alternative Text</label>
            <input id="alt" className="block h-[30px] w-full rounded-[4px] border border-[#8c8f94] bg-white px-2" />
            <p className="mt-[5px]"><a href="#learn" className={link}>Learn how to describe the purpose of the image</a>. Leave empty if the image is purely decorative.</p>
            <label htmlFor="caption" className="mt-[15px] block font-bold">Caption</label>
            <textarea id="caption" className="mt-px block h-[60px] w-full rounded-[4px] border border-[#8c8f94] bg-white px-2" />
          </div>
          <div className="flex w-[280px] shrink-0 flex-col gap-5">
            <SaveBox />
            <WatermarkBox />
          </div>
        </main>
      </div>
    </div>
  );
}
